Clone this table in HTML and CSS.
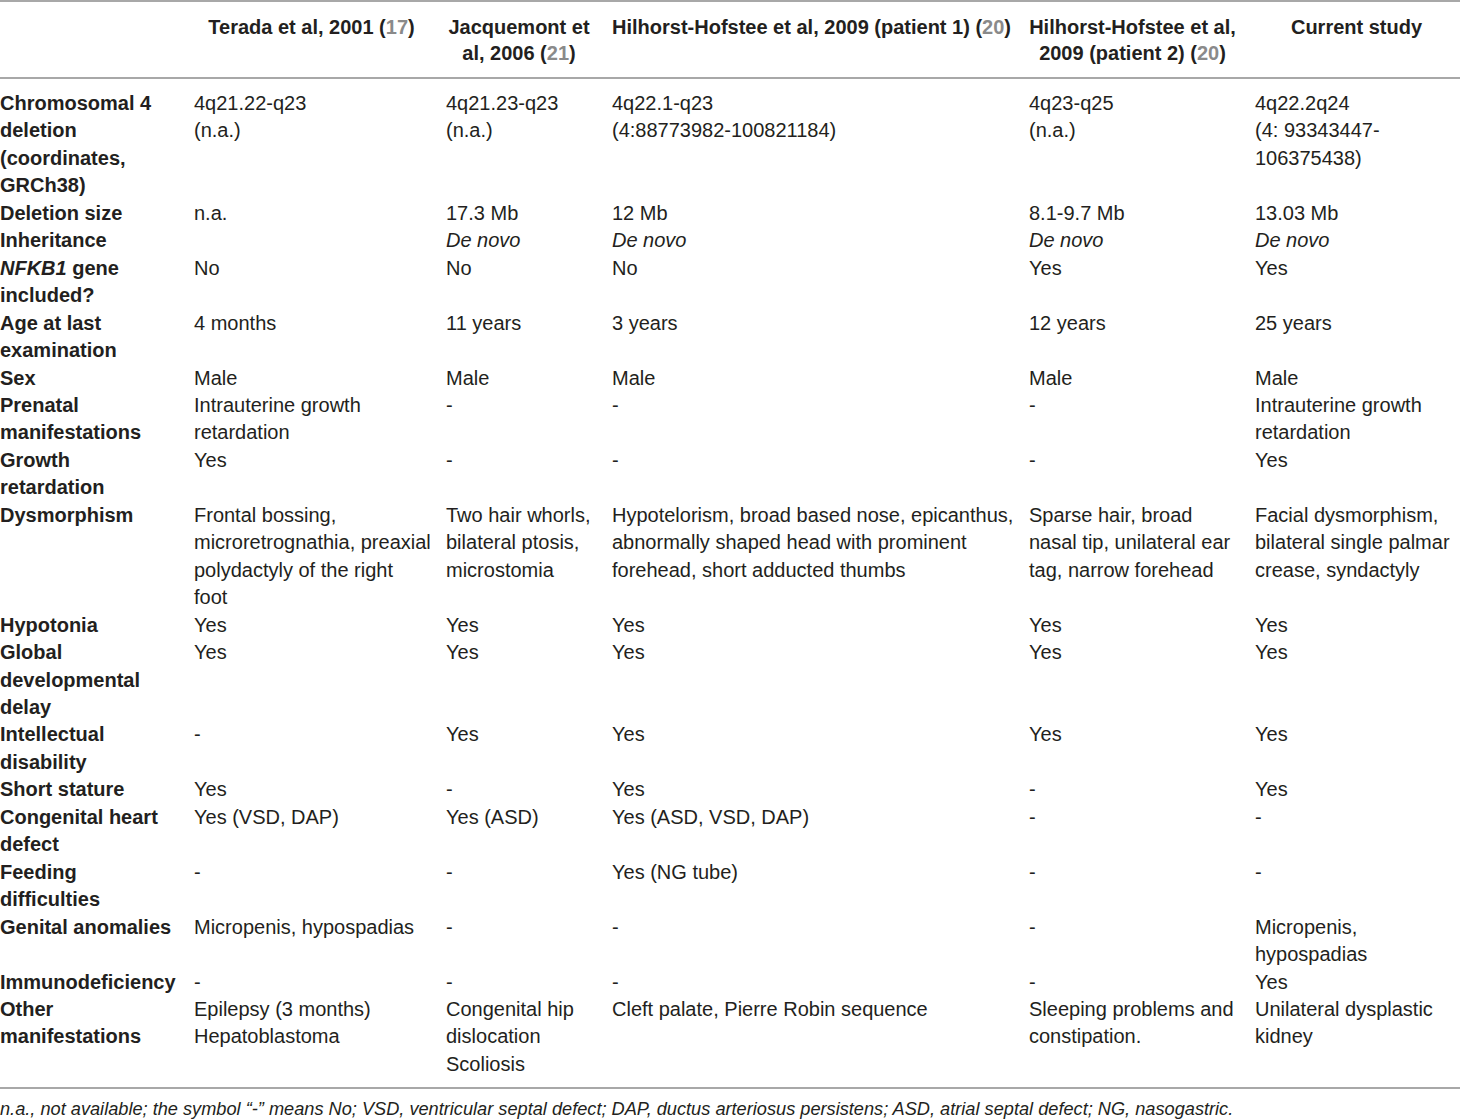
FILE: index.html
```html
<!DOCTYPE html>
<html lang="en">
<head>
    <meta charset="utf-8">
    <title>4q deletion cases</title>
    <link rel="stylesheet" href="styles.css">
</head>
<body>
<table class="cases">
    <colgroup>
        <col class="c-label">
        <col class="c-terada">
        <col class="c-jacq">
        <col class="c-hil1">
        <col class="c-hil2">
        <col class="c-cur">
    </colgroup>
    <thead>
    <tr>
        <th></th>
        <th class="h-terada">Terada et al, 2001 (<span class="ref">17</span>)</th>
        <th class="h-jacq">Jacquemont et<br>al, 2006 (<span class="ref">21</span>)</th>
        <th class="h-hil1">Hilhorst-Hofstee et al, 2009 (patient 1) (<span class="ref">20</span>)</th>
        <th class="h-hil2">Hilhorst-Hofstee et al,<br>2009 (patient 2) (<span class="ref">20</span>)</th>
        <th class="h-cur">Current study</th>
    </tr>
    </thead>
    <tbody>
    <tr>
        <th>Chromosomal 4<br>deletion<br>(coordinates,<br>GRCh38)</th>
        <td>4q21.22-q23<br>(n.a.)</td>
        <td>4q21.23-q23<br>(n.a.)</td>
        <td>4q22.1-q23<br>(4:88773982-100821184)</td>
        <td>4q23-q25<br>(n.a.)</td>
        <td>4q22.2q24<br>(4: 93343447-<br>106375438)</td>
    </tr>
    <tr>
        <th>Deletion size</th>
        <td>n.a.</td>
        <td>17.3 Mb</td>
        <td>12 Mb</td>
        <td>8.1-9.7 Mb</td>
        <td>13.03 Mb</td>
    </tr>
    <tr>
        <th>Inheritance</th>
        <td></td>
        <td><i>De novo</i></td>
        <td><i>De novo</i></td>
        <td><i>De novo</i></td>
        <td><i>De novo</i></td>
    </tr>
    <tr>
        <th><i>NFKB1</i> gene<br>included?</th>
        <td>No</td>
        <td>No</td>
        <td>No</td>
        <td>Yes</td>
        <td>Yes</td>
    </tr>
    <tr>
        <th>Age at last<br>examination</th>
        <td>4 months</td>
        <td>11 years</td>
        <td>3 years</td>
        <td>12 years</td>
        <td>25 years</td>
    </tr>
    <tr>
        <th>Sex</th>
        <td>Male</td>
        <td>Male</td>
        <td>Male</td>
        <td>Male</td>
        <td>Male</td>
    </tr>
    <tr>
        <th>Prenatal<br>manifestations</th>
        <td>Intrauterine growth<br>retardation</td>
        <td>-</td>
        <td>-</td>
        <td>-</td>
        <td>Intrauterine growth<br>retardation</td>
    </tr>
    <tr>
        <th>Growth<br>retardation</th>
        <td>Yes</td>
        <td>-</td>
        <td>-</td>
        <td>-</td>
        <td>Yes</td>
    </tr>
    <tr>
        <th>Dysmorphism</th>
        <td>Frontal bossing,<br>microretrognathia, preaxial<br>polydactyly of the right<br>foot</td>
        <td>Two hair whorls,<br>bilateral ptosis,<br>microstomia</td>
        <td>Hypotelorism, broad based nose, epicanthus,<br>abnormally shaped head with prominent<br>forehead, short adducted thumbs</td>
        <td>Sparse hair, broad<br>nasal tip, unilateral ear<br>tag, narrow forehead</td>
        <td>Facial dysmorphism,<br>bilateral single palmar<br>crease, syndactyly</td>
    </tr>
    <tr>
        <th>Hypotonia</th>
        <td>Yes</td>
        <td>Yes</td>
        <td>Yes</td>
        <td>Yes</td>
        <td>Yes</td>
    </tr>
    <tr>
        <th>Global<br>developmental<br>delay</th>
        <td>Yes</td>
        <td>Yes</td>
        <td>Yes</td>
        <td>Yes</td>
        <td>Yes</td>
    </tr>
    <tr>
        <th>Intellectual<br>disability</th>
        <td>-</td>
        <td>Yes</td>
        <td>Yes</td>
        <td>Yes</td>
        <td>Yes</td>
    </tr>
    <tr>
        <th>Short stature</th>
        <td>Yes</td>
        <td>-</td>
        <td>Yes</td>
        <td>-</td>
        <td>Yes</td>
    </tr>
    <tr>
        <th>Congenital heart<br>defect</th>
        <td>Yes (VSD, DAP)</td>
        <td>Yes (ASD)</td>
        <td>Yes (ASD, VSD, DAP)</td>
        <td>-</td>
        <td>-</td>
    </tr>
    <tr>
        <th>Feeding<br>difficulties</th>
        <td>-</td>
        <td>-</td>
        <td>Yes (NG tube)</td>
        <td>-</td>
        <td>-</td>
    </tr>
    <tr>
        <th>Genital anomalies</th>
        <td>Micropenis, hypospadias</td>
        <td>-</td>
        <td>-</td>
        <td>-</td>
        <td>Micropenis,<br>hypospadias</td>
    </tr>
    <tr>
        <th>Immunodeficiency</th>
        <td>-</td>
        <td>-</td>
        <td>-</td>
        <td>-</td>
        <td>Yes</td>
    </tr>
    <tr>
        <th>Other<br>manifestations</th>
        <td>Epilepsy (3 months)<br>Hepatoblastoma</td>
        <td>Congenital hip<br>dislocation<br>Scoliosis</td>
        <td>Cleft palate, Pierre Robin sequence</td>
        <td>Sleeping problems and<br>constipation.</td>
        <td>Unilateral dysplastic<br>kidney</td>
    </tr>
    </tbody>
</table>
<p class="note">n.a., not available; the symbol “-” means No; VSD, ventricular septal defect; DAP, ductus arteriosus persistens; ASD, atrial septal defect; NG, nasogastric.</p>
</body>
</html>
```

FILE: styles.css
```css
body{
    margin: 0;
    background: #ffffff;
    color: #231f20;
    font-family: "Liberation Sans", Arial, sans-serif;
}
.cases{
    width: 1460px;
    table-layout: fixed;
    border-collapse: collapse;
    border-top: 2px solid #a8a8a8;
    border-bottom: 2px solid #a8a8a8;
}
.c-label{ width: 194px; }
.c-terada{ width: 252px; }
.c-jacq{ width: 166px; }
.c-hil1{ width: 417px; }
.c-hil2{ width: 226px; }
.c-cur{ width: 205px; }

.cases thead th{
    font-size: 20px;
    line-height: 26px;
    font-weight: bold;
    text-align: center;
    vertical-align: top;
    padding: 12px 0 11px 0;
    border-bottom: 2px solid #a8a8a8;
    white-space: nowrap;
}
.cases thead .h-terada{ padding-right: 17px; }
.cases thead .h-jacq{ padding-right: 20px; }
.cases thead .h-hil1{ padding-right: 18px; }
.cases thead .h-hil2{ padding-right: 19px; }
.cases thead .h-cur{ padding-right: 2px; }

.ref{
    color: #8a8a8a;
}

.cases tbody th,
.cases tbody td{
    font-size: 20px;
    line-height: 27.46px;
    text-align: left;
    vertical-align: top;
    padding: 0 8px 0 0;
    white-space: nowrap;
}
.cases tbody th{
    font-weight: bold;
    padding-right: 4px;
}
.cases tbody td{
    font-weight: normal;
}
.cases tbody tr:first-child th,
.cases tbody tr:first-child td{
    padding-top: 11px;
}
.cases tbody tr:last-child th,
.cases tbody tr:last-child td{
    padding-bottom: 9px;
}

.note{
    margin: 9px 0 0 0;
    font-size: 18.2px;
    line-height: 22px;
    font-style: italic;
}
```
